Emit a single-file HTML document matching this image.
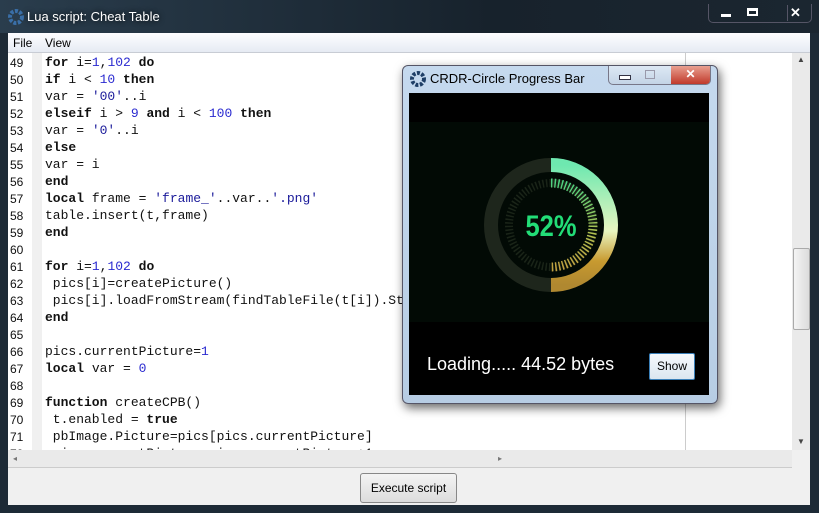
<!DOCTYPE html>
<html><head><style>
body{margin:0;width:819px;height:513px;overflow:hidden;background:#1d2a36;font-family:"Liberation Sans",sans-serif;position:relative}
.abs{position:absolute}
.ln{position:absolute;left:10px;font-family:"Liberation Sans",sans-serif;font-size:12px;color:#111}
.cl{position:absolute;left:45px;white-space:pre;font-family:"Liberation Mono",monospace;font-size:13px;color:#111}
.n{color:#2a2ad0;font-weight:normal}.s{color:#1a1a9a;font-weight:normal}
b{font-weight:bold}
</style></head><body>
<div class="abs" style="left:0;top:0;width:819px;height:33px;background:linear-gradient(90deg,#2a3d4d,#17222c 60%,#1b2630)"></div>
<svg class="abs" style="left:6px;top:8px" width="18" height="18" viewBox="0 0 18 18"><circle cx="10" cy="9" r="6" fill="none" stroke="#3a6fa8" stroke-width="4" stroke-dasharray="3 1.5"/></svg>
<div class="abs" style="left:27px;top:9px;color:#fff;font-size:13px;text-shadow:0 0 6px #000">Lua script: Cheat Table</div>
<div class="abs" style="left:708px;top:4px;width:102px;height:18px;border:1px solid #556;border-top:none;border-radius:0 0 5px 5px;color:#fff;font-size:13px;font-weight:bold">
<span class="abs" style="left:12px;top:10px;width:10px;height:3px;background:#fff"></span><span class="abs" style="left:38px;top:4px;width:11px;height:8px;border:2px solid #fff;border-top-width:3px;box-sizing:border-box"></span><span class="abs" style="left:78px;top:1px;width:1px;height:16px;border-left:1px solid #556"></span><span class="abs" style="left:-1px"></span><span class="abs" style="left:81px;top:1px">✕</span></div>
<div class="abs" style="left:8px;top:33px;width:802px;height:472px;background:#f0f0f0"></div>
<div class="abs" style="left:8px;top:33px;width:802px;height:19px;background:linear-gradient(#fdfdff,#e6ebf3);border-bottom:1px solid #c8ccd4;font-size:12px"><span class="abs" style="left:5px;top:3px">File</span><span class="abs" style="left:37px;top:3px">View</span></div>
<div class="abs" style="left:8px;top:53px;width:784px;height:397px;background:#fff;overflow:hidden">
<div class="abs" style="left:24px;top:0;width:10px;height:397px;background:#f0f0f0"></div>
<div class="abs" style="left:677px;top:0;width:1px;height:397px;background:#ccc"></div>
</div>
<div class="abs" style="left:8px;top:53px;width:784px;height:397px;overflow:hidden">
<div style="position:relative;top:-53px;left:-8px">
<div class="ln" style="top:56px">49</div><div class="cl" style="top:55px"><b>for</b> i=<span class="n">1</span>,<span class="n">102</span> <b>do</b></div>
<div class="ln" style="top:73px">50</div><div class="cl" style="top:72px"><b>if</b> i &lt; <span class="n">10</span> <b>then</b></div>
<div class="ln" style="top:90px">51</div><div class="cl" style="top:89px">var = <span class="s">'00'</span>..i</div>
<div class="ln" style="top:107px">52</div><div class="cl" style="top:106px"><b>elseif</b> i &gt; <span class="n">9</span> <b>and</b> i &lt; <span class="n">100</span> <b>then</b></div>
<div class="ln" style="top:124px">53</div><div class="cl" style="top:123px">var = <span class="s">'0'</span>..i</div>
<div class="ln" style="top:141px">54</div><div class="cl" style="top:140px"><b>else</b></div>
<div class="ln" style="top:158px">55</div><div class="cl" style="top:157px">var = i</div>
<div class="ln" style="top:175px">56</div><div class="cl" style="top:174px"><b>end</b></div>
<div class="ln" style="top:192px">57</div><div class="cl" style="top:191px"><b>local</b> frame = <span class="s">'frame_'</span>..var..<span class="s">'.png'</span></div>
<div class="ln" style="top:209px">58</div><div class="cl" style="top:208px">table.insert(t,frame)</div>
<div class="ln" style="top:226px">59</div><div class="cl" style="top:225px"><b>end</b></div>
<div class="ln" style="top:243px">60</div>
<div class="ln" style="top:260px">61</div><div class="cl" style="top:259px"><b>for</b> i=<span class="n">1</span>,<span class="n">102</span> <b>do</b></div>
<div class="ln" style="top:277px">62</div><div class="cl" style="top:276px"> pics[i]=createPicture()</div>
<div class="ln" style="top:294px">63</div><div class="cl" style="top:293px"> pics[i].loadFromStream(findTableFile(t[i]).Stream)</div>
<div class="ln" style="top:311px">64</div><div class="cl" style="top:310px"><b>end</b></div>
<div class="ln" style="top:328px">65</div>
<div class="ln" style="top:345px">66</div><div class="cl" style="top:344px">pics.currentPicture=<span class="n">1</span></div>
<div class="ln" style="top:362px">67</div><div class="cl" style="top:361px"><b>local</b> var = <span class="n">0</span></div>
<div class="ln" style="top:379px">68</div>
<div class="ln" style="top:396px">69</div><div class="cl" style="top:395px"><b>function</b> createCPB()</div>
<div class="ln" style="top:413px">70</div><div class="cl" style="top:412px"> t.enabled = <b>true</b></div>
<div class="ln" style="top:430px">71</div><div class="cl" style="top:429px"> pbImage.Picture=pics[pics.currentPicture]</div>
<div class="ln" style="top:447px">72</div><div class="cl" style="top:446px"> pics.currentPicture=pics.currentPicture+1</div>
</div></div>
<div class="abs" style="left:792px;top:53px;width:18px;height:397px;background:#eaeaea"><div class="abs" style="left:1px;top:195px;width:15px;height:80px;background:linear-gradient(90deg,#f4f4f4,#dcdcdc);border:1px solid #aaa;border-radius:2px"></div><span class="abs" style="left:5px;top:2px;font-size:8px;color:#444">▲</span><span class="abs" style="left:5px;top:384px;font-size:8px;color:#444">▼</span></div>
<div class="abs" style="left:8px;top:450px;width:784px;height:17px;background:#eaeaea;border-bottom:1px solid #ccc;font-size:8px;color:#777"><span class="abs" style="left:5px;top:4px">◂</span><span class="abs" style="left:490px;top:4px">▸</span></div>
<div class="abs" style="left:360px;top:473px;width:95px;height:28px;border:1px solid #888;border-radius:3px;background:linear-gradient(#f4f4f4,#dcdcdc);font-size:12px;text-align:center;line-height:28px">Execute script</div>
<div class="abs" style="left:402px;top:65px;width:314px;height:337px;border-radius:6px;background:linear-gradient(#c5d9ee,#b7cde4);border:1px solid #556;box-shadow:2px 4px 10px rgba(0,0,0,.6)"></div>
<svg class="abs" style="left:408px;top:70px" width="18" height="18" viewBox="0 0 18 18"><circle cx="10" cy="9" r="6" fill="none" stroke="#1e3e66" stroke-width="4" stroke-dasharray="3 1.5"/></svg>
<div class="abs" style="left:430px;top:71px;font-size:13px;color:#000">CRDR-Circle Progress Bar</div>
<div class="abs" style="left:608px;top:66px;width:101px;height:18px;border:1px solid #778;border-top:none;border-radius:0 0 5px 5px;overflow:hidden;background:linear-gradient(#dde8f4,#c4d4e6)">
<div class="abs" style="left:62px;top:0;width:39px;height:18px;background:linear-gradient(#e9a090,#c0392b);color:#fff;font-weight:bold;font-size:12px;text-align:center;line-height:17px">✕</div>
<div class="abs" style="left:10px;top:9px;width:10px;height:3px;border:1px solid #334;background:#fff"></div>
<div class="abs" style="left:36px;top:4px;width:8px;height:7px;border:1px solid #99a"></div></div>
<div class="abs" style="left:409px;top:93px;width:300px;height:302px;background:#000"></div>
<div class="abs" style="left:409px;top:122px;width:300px;height:200px;background:#020a05"></div>
<svg class="abs" style="left:479px;top:153px" width="144" height="144" viewBox="0 0 144 144">
<circle cx="72" cy="72" r="60" fill="none" stroke="#1e261c" stroke-width="14"/>
<circle cx="72" cy="72" r="42" fill="none" stroke="#1a2418" stroke-width="8" stroke-dasharray="1.5 2"/>
<path d="M72 12 A60 60 0 0 1 72 132" fill="none" stroke="url(#g)" stroke-width="14"/>
<path d="M72 30 A42 42 0 0 1 72 114" fill="none" stroke="url(#g2)" stroke-width="9" stroke-dasharray="1.5 2"/>
<defs><linearGradient id="g" x1="0" y1="0" x2="0" y2="1"><stop offset="0" stop-color="#6ee8b0"/><stop offset=".55" stop-color="#e8f5c0"/><stop offset=".8" stop-color="#c89a30"/><stop offset="1" stop-color="#b08830"/></linearGradient>
<linearGradient id="g2" x1="0" y1="0" x2="0" y2="1"><stop offset="0" stop-color="#4fd080"/><stop offset=".6" stop-color="#b0c050"/><stop offset="1" stop-color="#c0a040"/></linearGradient></defs>
<text x="72" y="83" text-anchor="middle" fill="#22dd77" font-family="Liberation Sans Narrow,Liberation Sans,sans-serif" font-weight="bold" font-size="30" transform="translate(72 0) scale(.85 1) translate(-72 0)">52%</text>
</svg>
<div class="abs" style="left:427px;top:354px;color:#fff;font-size:18px">Loading..... 44.52 bytes</div>
<div class="abs" style="left:649px;top:353px;width:44px;height:25px;border:1px solid #3a7fb8;border-radius:2px;background:linear-gradient(#f6f9fc,#dbe6f0);font-size:12px;text-align:center;line-height:25px">Show</div>
</body></html>
